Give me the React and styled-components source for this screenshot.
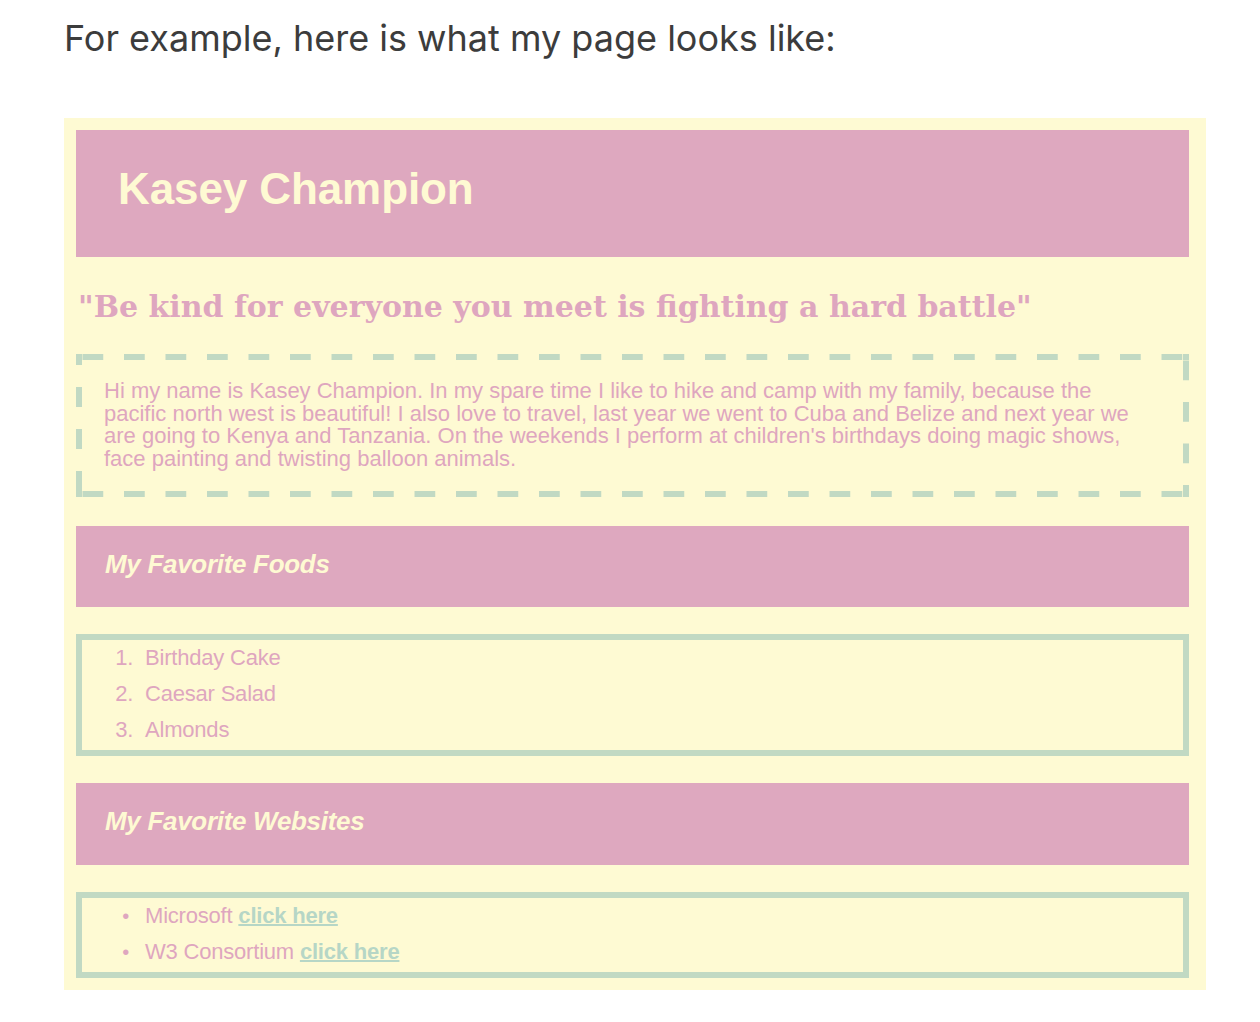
import React from "react";
import styled, { createGlobalStyle } from "styled-components";

const GlobalStyle = createGlobalStyle`
  body {
    margin: 0;
    background: #fff;
    font-family: Inter, "Noto Sans", sans-serif;
  }
`;

const dash = "#c1d9c3";

const Page = styled.div`
  width: 1260px;
  padding: 16px 0 32px 64px;
  box-sizing: border-box;
`;

const Intro = styled.p`
  margin: 0 0 58px;
  font-size: 36px;
  line-height: 44px;
  color: #3c3c3c;
`;

const Shot = styled.div`
  width: 1142px;
  box-sizing: border-box;
  padding: 12px 17px 12px 12px;
  background: #fefad3;
  font-family: "Liberation Sans", Arial, sans-serif;
  color: #dea6bf;
  display: flex;
  flex-direction: column;
`;

const Banner = styled.div`
  height: ${(p) => p.$height}px;
  box-sizing: border-box;
  padding: 0 0 ${(p) => p.$lift}px ${(p) => p.$indent}px;
  background: #dea8bf;
  display: flex;
  align-items: center;
  margin-top: ${(p) => p.$top || 0}px;
`;

const Name = styled.h1`
  margin: 0;
  font-size: 44px;
  font-weight: 700;
  color: #fefad3;
  letter-spacing: -0.1px;
`;

const SectionTitle = styled.h2`
  margin: 0;
  font-size: 26px;
  font-weight: 700;
  font-style: italic;
  color: #fefad3;
  letter-spacing: -0.3px;
`;

const Quote = styled.h2`
  margin: 28px 0 0 2px;
  font-family: "DejaVu Serif", Georgia, serif;
  font-size: 30px;
  line-height: 44px;
  font-weight: 700;
  color: #dea6bf;
`;

const About = styled.p`
  margin: 25px 0 0;
  border: 6px solid transparent;
  padding: 20px 20px 21px 22px;
  background:
    linear-gradient(${dash}, ${dash}) 0 0 / 6px 6px no-repeat,
    linear-gradient(${dash}, ${dash}) 100% 0 / 6px 6px no-repeat,
    linear-gradient(${dash}, ${dash}) 0 100% / 6px 6px no-repeat,
    linear-gradient(${dash}, ${dash}) 100% 100% / 6px 6px no-repeat,
    linear-gradient(90deg, ${dash} 21px, transparent 0) 6.5px 0 / 41.5px 6px repeat-x,
    linear-gradient(90deg, ${dash} 21px, transparent 0) 6.5px 100% / 41.5px 6px repeat-x,
    linear-gradient(180deg, ${dash} 20px, transparent 0) 0 33px / 6px 42px repeat-y,
    linear-gradient(180deg, ${dash} 20px, transparent 0) 100% 6.5px / 6px 41.5px repeat-y;
  background-origin: border-box;
  font-size: 22px;
  line-height: 22.5px;
  letter-spacing: 0;
  white-space: nowrap;
`;

const ListBox = styled.div`
  margin-top: 27px;
  border: 6px solid ${dash};
  padding: 0 0 2px;
`;

const Ordered = styled.ol`
  margin: 0;
  padding-left: 63px;
  font-size: 22px;
  line-height: 36px;
  letter-spacing: -0.2px;

  li::marker {
    content: counter(list-item) ".\\00a0\\00a0";
  }
`;

const Bulleted = styled.ul`
  margin: 0;
  padding-left: 63px;
  font-size: 22px;
  line-height: 36px;
  letter-spacing: -0.2px;

  li::marker {
    content: "•\\00a0\\00a0\\00a0";
    font-size: 20px;
  }
`;

const Item = styled.li``;

const Link = styled.a`
  color: #b6d6c6;
  font-weight: 700;
  text-decoration: underline;
  text-decoration-thickness: 2px;
`;

export default function App() {
  return (
    <>
      <GlobalStyle />
      <Page>
        <Intro>For example, here is what my page looks like:</Intro>
        <Shot>
          <Banner $height={127} $indent={42} $lift={10}>
            <Name>Kasey Champion</Name>
          </Banner>
          <Quote>"Be kind for everyone you meet is fighting a hard battle"</Quote>
          <About>
            Hi my name is Kasey Champion. In my spare time I like to hike and camp with my family, because the
            <br />
            pacific north west is beautiful! I also love to travel, last year we went to Cuba and Belize and next year we
            <br />
            are going to Kenya and Tanzania. On the weekends I perform at children's birthdays doing magic shows,
            <br />
            face painting and twisting balloon animals.
          </About>
          <Banner $height={81} $indent={29} $lift={5} $top={29}>
            <SectionTitle>My Favorite Foods</SectionTitle>
          </Banner>
          <ListBox>
            <Ordered>
              <Item>Birthday Cake</Item>
              <Item>Caesar Salad</Item>
              <Item>Almonds</Item>
            </Ordered>
          </ListBox>
          <Banner $height={82} $indent={29} $lift={5} $top={27}>
            <SectionTitle>My Favorite Websites</SectionTitle>
          </Banner>
          <ListBox>
            <Bulleted>
              <Item>
                Microsoft <Link href="#">click here</Link>
              </Item>
              <Item>
                W3 Consortium <Link href="#">click here</Link>
              </Item>
            </Bulleted>
          </ListBox>
        </Shot>
      </Page>
    </>
  );
}
